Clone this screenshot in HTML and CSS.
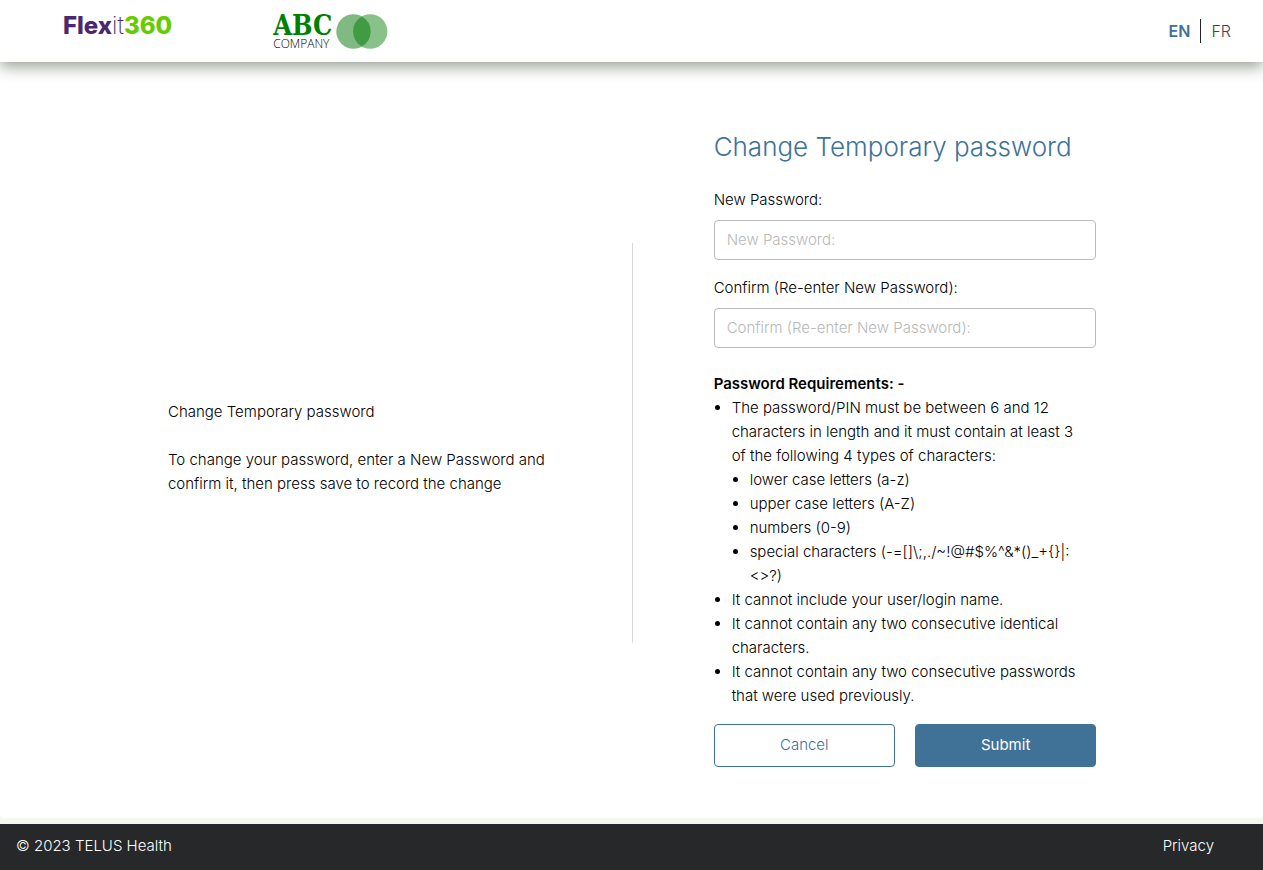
FILE: index.html
```
<!DOCTYPE html>
<html lang="en">
<head>
<meta charset="utf-8">
<meta name="viewport" content="width=device-width, initial-scale=1">
<title>Change Temporary password</title>
<link rel="stylesheet" href="styles.css">
</head>
<body>
<header class="header">
  <div class="logos">
    <div class="flexit"><span class="flexit-flex">Flex</span><span class="flexit-it">it</span><span class="flexit-num">360</span></div>
    <div class="company">
      <div class="company-name">
        <span class="company-abc">ABC</span>
        <span class="company-word">COMPANY</span>
      </div>
      <svg class="company-mark" width="52" height="36" viewBox="0 0 52 36" aria-hidden="true">
        <circle cx="17.5" cy="17.5" r="17.2" fill="#7fba80"/>
        <circle cx="34.2" cy="17.5" r="17.2" fill="#88c18a"/>
        <path d="M25.85 2.5a17.2 17.2 0 0 1 0 30 17.2 17.2 0 0 1 0-30z" fill="#409c43"/>
      </svg>
    </div>
  </div>
  <nav class="languages" aria-label="Language">
    <a class="language language-current" href="#en">EN</a>
    <a class="language" href="#fr">FR</a>
  </nav>
</header>
<main class="main">
  <section class="intro">
    <p class="intro-text">Change Temporary password</p>
    <p class="intro-text">To change your password, enter a New Password and confirm it, then press save to record the change</p>
  </section>
  <div class="divider"></div>
  <form class="form">
    <h1 class="title">Change Temporary password</h1>
    <div class="field">
      <label class="label" for="new-password">New Password:</label>
      <input class="input" id="new-password" type="password" placeholder="New Password:">
    </div>
    <div class="field">
      <label class="label" for="confirm-password">Confirm (Re-enter New Password):</label>
      <input class="input" id="confirm-password" type="password" placeholder="Confirm (Re-enter New Password):">
    </div>
    <div class="requirements">
      <h2 class="requirements-title">Password Requirements: -</h2>
      <ul class="list">
        <li>The password/PIN must be between 6 and 12 characters in length and it must contain at least 3 of the following 4 types of characters:
          <ul class="list">
            <li>lower case letters (a-z)</li>
            <li>upper case letters (A-Z)</li>
            <li>numbers (0-9)</li>
            <li>special characters (-=[]\;,./~!@#$%^&amp;*()_+{}|:<wbr>&lt;&gt;?)</li>
          </ul>
        </li>
        <li>It cannot include your user/login name.</li>
        <li>It cannot contain any two consecutive identical characters.</li>
        <li>It cannot contain any two consecutive passwords that were used previously.</li>
      </ul>
    </div>
    <div class="actions">
      <button class="button button-outline" type="button">Cancel</button>
      <button class="button button-primary" type="submit">Submit</button>
    </div>
  </form>
</main>
<footer class="footer">
  <span>© 2023 TELUS Health</span>
  <a class="footer-link" href="#privacy">Privacy</a>
</footer>
</body>
</html>
```
FILE: styles.css
```
* { box-sizing: border-box; }

body {
  display: flex;
  flex-direction: column;
  min-height: 100vh;
  margin: 0;
  background: #f4f8f1;
  color: #000;
  font: 300 15px/24px Inter, "Liberation Sans", sans-serif;
}

.header {
  position: relative;
  display: flex;
  justify-content: space-between;
  align-items: center;
  height: 62px;
  padding: 0 32px 0 63px;
  background: #fff;
  box-shadow: 0 4px 15px #8f988b;
}

.logos {
  display: flex;
  align-items: center;
  gap: 101px;
}

.flexit {
  padding-bottom: 11px;
  font: 800 24px/28px Inter, sans-serif;
}
.flexit-flex { color: #4b286d; }
.flexit-it {
  color: #4b286d;
  font-weight: 200;
}
.flexit-num { color: #66cc00; }

.company {
  display: flex;
  align-items: center;
  gap: 4px;
  padding-top: 2px;
}
.company-name {
  display: flex;
  flex-direction: column;
}
.company-abc {
  color: #008000;
  font: 700 27px/24px "DejaVu Serif Condensed", "DejaVu Serif", serif;
}
.company-word {
  font: 300 12px/12px "Open Sans", sans-serif;
}
.company-mark { display: block; }

.languages { display: flex; }
.language {
  padding: 0 10px;
  color: #444;
  font-size: 16px;
  text-decoration: none;
}
.language + .language {
  padding-right: 0;
  border-left: 1px solid #222;
}
.language-current {
  color: #407297;
  font-weight: 600;
}

.main {
  flex: 1;
  display: grid;
  grid-template-columns: 1fr 1px 1fr;
  align-items: center;
  column-gap: 81px;
  margin-bottom: 6px;
  padding: 57px 13.2% 51px 13.3%;
  border-radius: 0 0 4px 4px;
  background: #fff;
}

.intro {
  display: grid;
  gap: 24px;
  padding-top: 10px;
}
.intro-text { margin: 0; }

.divider {
  height: 400px;
  background: #d8d8d8;
}

.title {
  margin: 8px 0 21px;
  color: #407297;
  font-size: 26px;
  font-weight: 300;
  line-height: 40px;
}

.field { margin-bottom: 16px; }
.label {
  display: block;
  margin-bottom: 8px;
}
.input {
  display: block;
  width: 100%;
  height: 40px;
  padding: 0 12px 2px;
  border: 1px solid #bbb;
  border-radius: 4px;
  background: #fff;
  font: inherit;
}
.input::placeholder {
  color: #b8b8b8;
  opacity: 1;
}

.requirements {
  padding: 8px 10px 0 0;
}
.requirements-title {
  margin: 0;
  font-size: 15px;
  font-weight: 600;
  line-height: 24px;
}
.list {
  margin: 0;
  padding-left: 18px;
  list-style: disc;
}

.actions {
  display: grid;
  grid-template-columns: 1fr 1fr;
  gap: 20px;
  margin-top: 16px;
}
.button {
  height: 43px;
  padding: 0 12px 2px;
  border: 1px solid #407297;
  border-radius: 4px;
  font: inherit;
}
.button-outline {
  background: #fff;
  color: #407297;
}
.button-primary {
  background: #407297;
  color: #fff;
  font-weight: 400;
}

.footer {
  display: flex;
  justify-content: space-between;
  align-items: center;
  height: 46px;
  padding: 0 49px 2px 16px;
  background: #262829;
  color: #fff;
}
.footer-link {
  color: inherit;
  text-decoration: none;
}
```
